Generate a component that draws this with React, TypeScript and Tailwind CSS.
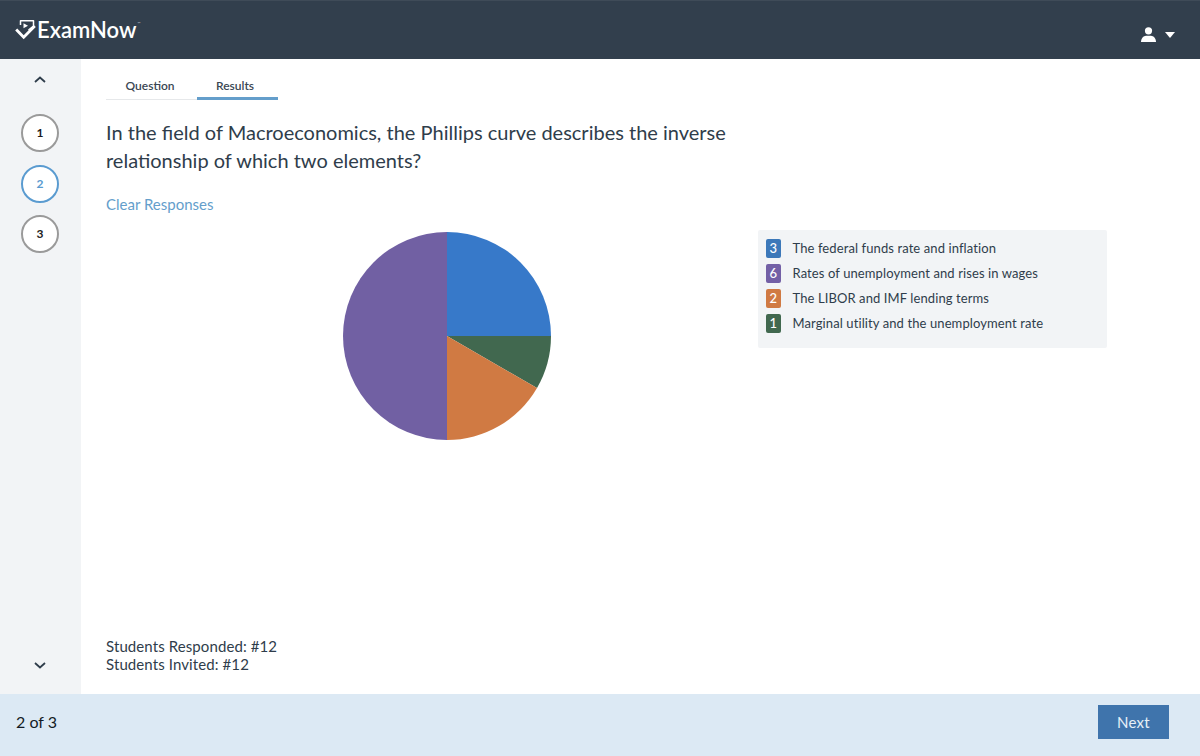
import React from 'react';

const answers = [
  { count: 3, label: 'The federal funds rate and inflation', badge: 'bg-[#3c78b9]' },
  { count: 6, label: 'Rates of unemployment and rises in wages', badge: 'bg-[#7360a6]' },
  { count: 2, label: 'The LIBOR and IMF lending terms', badge: 'bg-[#d07a43]' },
  { count: 1, label: 'Marginal utility and the unemployment rate', badge: 'bg-[#41684f]' },
];

const Logo = () => (
  <svg width="21" height="22" viewBox="0 0 21 22" fill="none" className="shrink-0 -mt-[1px]">
    <path d="M5.500 6V1.800h13V7L13.500 11" stroke="#fff" strokeWidth="1.500" strokeLinejoin="round" />
    <path d="M8.500 4.300l4.500 2.400-4.500 2.600z" fill="#fff" />
    <path d="M1.200 10.500l7.500 7.800L19.800 7" stroke="#fff" strokeWidth="2.800" strokeLinejoin="miter" />
  </svg>
);

const Step = ({ n, active }: { n: number; active?: boolean }) => (
  <div
    className={
      active
        ? 'w-[38px] h-[38px] rounded-full border-2 border-[#5a9bd0] bg-white flex items-center justify-center text-[12px] font-bold text-[#5a9bd0]'
        : 'w-[38px] h-[38px] rounded-full border-2 border-[#9a9a9a] bg-white flex items-center justify-center text-[12px] font-bold text-[#1c1c1c]'
    }
  >
    {n}
  </div>
);

export default function App() {
  return (
    <div className="w-[1200px] h-[756px] flex flex-col overflow-hidden bg-white font-['Lato',sans-serif] text-[#2f3d4b]">
      <header className="h-[59px] shrink-0 bg-[#323f4d] border-t border-[#3f4b58] flex items-center justify-between pl-[15px] pr-[25px]">
        <div className="flex items-center gap-[1px]">
          <Logo />
          <span className="text-[22px] font-semibold text-white leading-none">ExamNow</span>
          <span className="text-[4px] text-white/70 -mt-[12px] leading-none">™</span>
        </div>
        <div className="flex items-center gap-[9px] pt-[9px]">
          <svg width="15" height="15" viewBox="0 0 15 15" fill="#fff">
            <circle cx="7.500" cy="3.800" r="3.600" />
            <path d="M0 15c0-4 2.500-6 5-6.300h5c2.500.3 5 2.300 5 6.300z" />
          </svg>
          <svg width="10" height="6" viewBox="0 0 10 6" fill="#fff">
            <path d="M0 0h10L5 6z" />
          </svg>
        </div>
      </header>

      <div className="flex-1 flex min-h-0">
        <aside className="w-[81px] shrink-0 bg-[#f2f4f6] flex flex-col items-center justify-between pt-[17px] pb-[25px]">
          <div className="flex flex-col items-center">
            <svg width="12" height="7" viewBox="0 0 12 7" fill="none" stroke="#2f3d4b" strokeWidth="1.800" className="-ml-[1px]">
              <path d="M1 6l5-4.500L11 6" />
            </svg>
            <div className="flex flex-col gap-[12.500px] mt-[31px] -ml-[1px]">
              <Step n={1} />
              <Step n={2} active />
              <Step n={3} />
            </div>
          </div>
          <svg width="12" height="7" viewBox="0 0 12 7" fill="none" stroke="#2f3d4b" strokeWidth="1.800" className="-ml-[1px]">
            <path d="M1 1l5 4.500L11 1" />
          </svg>
        </aside>

        <main className="flex-1 min-w-0 flex flex-col pl-[25px] pb-[21px]">
          <nav className="flex mt-[16px] w-max text-[12px] font-semibold text-[#3a4753]">
            <div className="w-[91px] h-[25px] border-b border-[#e6e8ea] text-center pr-[3px] leading-[22px]">Question</div>
            <div className="w-[81px] h-[25px] border-b-[3px] border-[#649ecb] text-center pr-[5px] leading-[22px]">Results</div>
          </nav>

          <h1 className="mt-[18px] w-[640px] text-[20px] leading-[28px] font-normal">
            In the field of Macroeconomics, the Phillips curve describes the inverse relationship of which two elements?
          </h1>

          <div className="mt-[20px] text-[15px] leading-[20px] text-[#649ecb]">Clear Responses</div>

          <div className="mt-[18px] flex items-start">
            <svg width="208" height="208" viewBox="0 0 208 208" className="ml-[236.500px] shrink-0">
              <path d="M104 104V0A104 104 0 0 1 208 104z" fill="#3779c9" />
              <path d="M104 104H208A104 104 0 0 1 194 156z" fill="#41684f" />
              <path d="M104 104L194 156A104 104 0 0 1 104 208z" fill="#d07a43" />
              <path d="M104 104V208A104 104 0 0 1 104 0z" fill="#7160a3" />
            </svg>
            <div className="ml-[207.500px] -mt-[2px] w-[349px] h-[118px] rounded-[2px] bg-[#f2f4f6] pl-[8px] pt-[9px] flex flex-col gap-[6px]">
              {answers.map((a) => (
                <div key={a.label} className="flex items-center h-[19px]">
                  <span className={`${a.badge} w-[14.500px] h-[19px] rounded-[2px] flex items-center justify-center text-white text-[13px] font-medium`}>
                    {a.count}
                  </span>
                  <span className="ml-[12px] text-[13px] tracking-[0.1px] whitespace-nowrap">{a.label}</span>
                </div>
              ))}
            </div>
          </div>

          <div className="mt-auto text-[15px] leading-[18px] tracking-[0.1px]">
            <div>Students Responded: #12</div>
            <div>Students Invited: #12</div>
          </div>
        </main>
      </div>

      <footer className="h-[62px] shrink-0 bg-[#dce9f4] flex items-center justify-between pl-[16px] pr-[31px] pb-[6px]">
        <span className="text-[16px] text-[#141c24]">2 of 3</span>
        <button className="w-[71px] h-[34px] bg-[#3f74ac] text-[#e6f0f8] text-[15px] tracking-[0.3px]">Next</button>
      </footer>
    </div>
  );
}
